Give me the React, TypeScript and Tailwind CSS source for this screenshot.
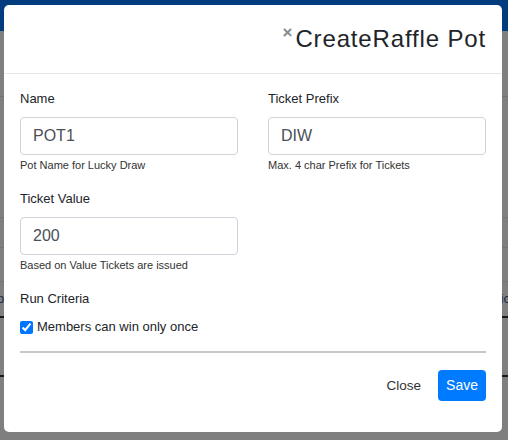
import React from "react";

const font = { fontFamily: '"Liberation Sans", Arial, sans-serif' };

function Field({ label, value, help }: { label: string; value: string; help: string }) {
  return (
    <div className="flex flex-col">
      <label className="text-[13px] leading-[20px] text-[#212529] mb-[8px]">{label}</label>
      <input
        defaultValue={value}
        className="h-[38px] w-full rounded-[4px] border border-[#ced4da] bg-white px-[12px] text-[16px] text-[#495057] outline-none"
        style={font}
      />
      <small className="mt-[3px] text-[11px] leading-[15px] text-[#333]">{help}</small>
    </div>
  );
}

export default function App() {
  return (
    <div className="relative h-[440px] w-[508px] overflow-hidden bg-[#7f7f7f]" style={font}>
      {/* page behind the backdrop */}
      <div className="h-[31px] bg-[#023c7e]" />
      <div className="h-[66px] border-b border-[#727272]" />
      <div className="h-[121px] border-b border-[#737373]" />
      <div className="h-[30px] border-b border-[#747474]" />
      <div className="h-[34px] border-b border-[#747474]" />
      <div className="flex h-[36px] items-center justify-between border-b-2 border-[#1a1a1a] text-[13px] text-[#1f2a44]">
        <span className="-ml-[3px]">o</span>
        <span className="-mr-[2px]">ic</span>
      </div>
      <div className="h-[59px] border-b-2 border-[#1a1a1a]" />

      {/* modal */}
      <div className="absolute left-[4px] top-[5px] w-[498px] rounded-[5px] bg-white">
        <div className="flex h-[69px] items-center justify-end border-b border-[#e5e7eb] px-4">
          <span className="mr-[3px] -mt-[14px] text-[17px] font-bold leading-none text-[#888]">×</span>
          <h5 className="text-[24px] leading-[36px] tracking-[0.85px] text-[#212529]">CreateRaffle Pot</h5>
        </div>

        <div className="px-4 pt-[15px]">
          <div className="grid grid-cols-2 gap-x-[30px]">
            <Field label="Name" value="POT1" help="Pot Name for Lucky Draw" />
            <Field label="Ticket Prefix" value="DIW" help="Max. 4 char Prefix for Tickets" />
          </div>
          <div className="mt-[16px] grid grid-cols-2 gap-x-[30px]">
            <Field label="Ticket Value" value="200" help="Based on Value Tickets are issued" />
          </div>

          <div className="mt-[16px] text-[13px] leading-[20px] text-[#212529]">Run Criteria</div>
          <label className="mt-[8px] flex h-[20px] items-center gap-[4px] text-[13px] text-[#212529]">
            <input type="checkbox" defaultChecked className="m-0 h-[13px] w-[13px] accent-[#0075ff]" />
            Members can win only once
          </label>

          <div className="mt-[14px] h-[2px] bg-[#c8c8c8]" />
        </div>

        <div className="flex items-center justify-end gap-[17px] px-4 pt-[17px] pb-[31px]">
          <button className="text-[13.5px] leading-[21px] text-[#333]">Close</button>
          <button className="h-[31px] rounded-[4px] bg-[#007bff] px-[8px] text-[14px] leading-[21px] text-white">
            Save
          </button>
        </div>
      </div>
    </div>
  );
}
